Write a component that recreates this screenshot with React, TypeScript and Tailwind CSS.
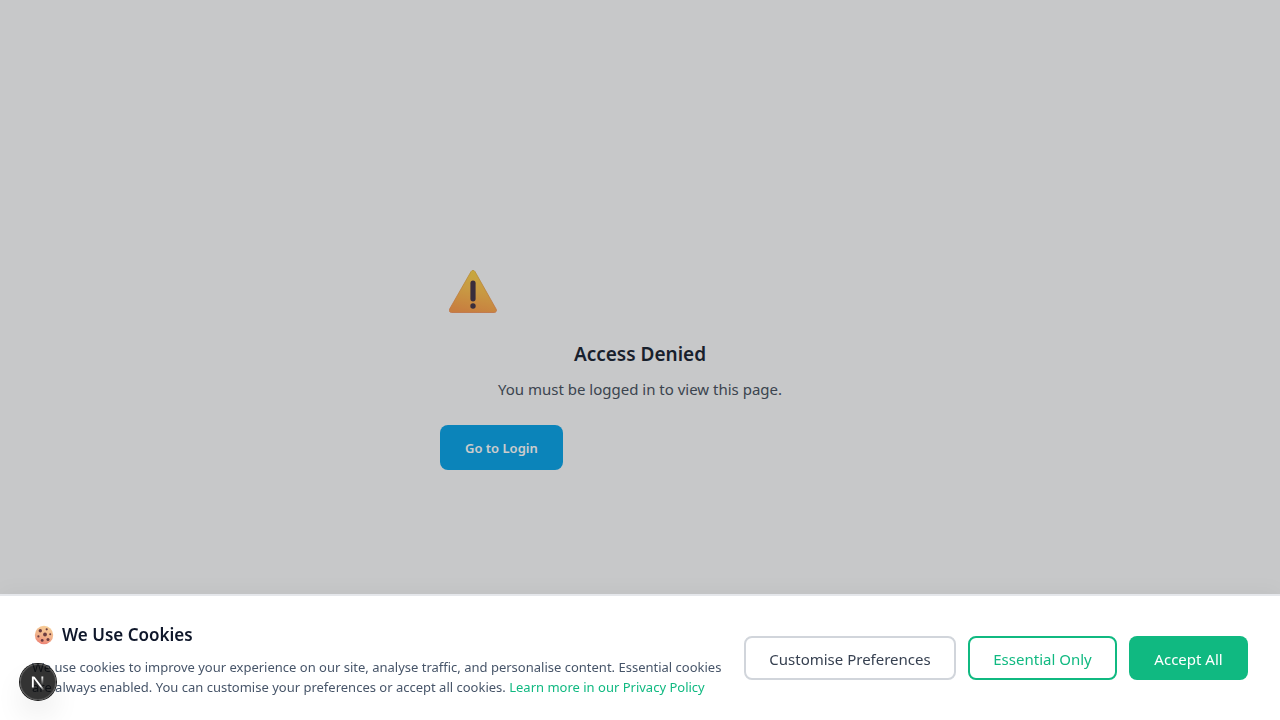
function WarningIcon() {
  return (
    <svg viewBox="0 0 48 43" className="ml-[9px] h-[43px] w-12" role="img" aria-label="Warning">
      <defs>
        <linearGradient id="warn-fill" x1="30" y1="3" x2="22" y2="43" gradientUnits="userSpaceOnUse">
          <stop offset="0" stopColor="#f9d24e" />
          <stop offset="0.45" stopColor="#fbc054" />
          <stop offset="1" stopColor="#f99e50" />
        </linearGradient>
        <linearGradient id="warn-edge" x1="24" y1="0" x2="24" y2="43" gradientUnits="userSpaceOnUse">
          <stop offset="0" stopColor="#e6b445" />
          <stop offset="1" stopColor="#f08c54" />
        </linearGradient>
      </defs>
      <path
        d="M22 1.6c.9-1.6 3.1-1.6 4 0l21.2 37.6c.9 1.6-.2 3.3-1.9 3.3H2.4c-1.7 0-2.7-1.7-1.9-3.3Z"
        fill="url(#warn-fill)"
        stroke="url(#warn-edge)"
        strokeWidth="0.8"
      />
      <rect x="21.4" y="10.6" width="5.2" height="20.8" rx="2.6" fill="#483a4c" />
      <circle cx="24" cy="36" r="2.7" fill="#483a4c" />
    </svg>
  );
}

function CookieIcon() {
  return (
    <svg viewBox="0 0 20 20" className="ml-[2px] size-5 shrink-0" aria-hidden="true">
      <defs>
        <linearGradient id="cookie-fill" x1="13" y1="1" x2="8" y2="20" gradientUnits="userSpaceOnUse">
          <stop offset="0" stopColor="#f8cf98" />
          <stop offset="0.55" stopColor="#f0b18b" />
          <stop offset="1" stopColor="#ed7d72" />
        </linearGradient>
      </defs>
      <circle cx="10" cy="10" r="9.2" fill="url(#cookie-fill)" />
      <g fill="#6b3c40">
        <circle cx="6.3" cy="5.7" r="1.7" />
        <circle cx="12.7" cy="4.3" r="1.1" />
        <circle cx="11" cy="9.5" r="1.9" />
        <circle cx="16.2" cy="9.2" r="1" />
        <circle cx="4.4" cy="11.4" r="1.1" />
        <circle cx="8.2" cy="15.4" r="1.4" />
        <circle cx="14" cy="14.6" r="1.5" />
      </g>
    </svg>
  );
}

function DevToolsButton() {
  return (
    <button
      type="button"
      aria-label="Open Next.js Dev Tools"
      className="fixed bottom-5 left-5 z-50 flex size-9 items-center justify-center rounded-full bg-black/80 shadow-[0_0_0_1px_#171717,inset_0_0_0_1px_rgba(255,255,255,0.14),0_16px_32px_-8px_rgba(0,0,0,0.24)]"
    >
      <svg viewBox="0 0 40 40" fill="none" className="size-10 shrink-0" aria-hidden="true">
        <defs>
          <linearGradient id="n-diagonal" x1="9.956" y1="11.123" x2="15.478" y2="17.967" gradientUnits="userSpaceOnUse">
            <stop stopColor="white" />
            <stop offset="0.604" stopColor="white" stopOpacity="0" />
            <stop offset="1" stopColor="white" stopOpacity="0" />
          </linearGradient>
          <linearGradient id="n-stem" x1="11.822" y1="1.4" x2="11.792" y2="9.625" gradientUnits="userSpaceOnUse">
            <stop stopColor="white" />
            <stop offset="1" stopColor="white" stopOpacity="0" />
          </linearGradient>
          <mask id="n-mask" maskUnits="userSpaceOnUse" x="0" y="0" width="20" height="20">
            <rect width="20" height="20" fill="white" />
            <rect width="5" height="1.5" fill="black" />
          </mask>
        </defs>
        <g transform="translate(12.5 13)">
          <path d="M13.3 15.2 L2.34 1 V12.6" stroke="url(#n-diagonal)" strokeWidth="1.86" mask="url(#n-mask)" />
          <path d="M11.825 1.5 V13.1" stroke="url(#n-stem)" strokeWidth="1.86" />
        </g>
      </svg>
    </button>
  );
}

export default function App() {
  return (
    <div className="min-h-screen bg-[#f9fafc] font-['Noto_Sans','Open_Sans',sans-serif]">
      <main className="flex min-h-screen items-center justify-center">
        <div className="w-full max-w-[400px] pt-5">
          <WarningIcon />
          <h1 className="mt-[27px] text-center text-[19px] leading-[28px] font-semibold text-[#1f2937]">Access Denied</h1>
          <p className="mt-[9px] text-center text-[15px] leading-6 text-[#4b5563]">
            You must be logged in to view this page.
          </p>
          <a
            href="#login"
            className="mt-6 inline-flex h-[45px] items-center rounded-lg bg-[#0ea5e9] px-[25px] pt-0.5 text-[13px] font-semibold text-white"
          >
            Go to Login
          </a>
        </div>
      </main>

      <div className="fixed inset-0 z-30 bg-black/20" />

      <section
        aria-labelledby="cookie-title"
        className="fixed inset-x-0 bottom-0 z-40 flex items-center gap-4 border-t-2 border-[#e5e7eb] bg-white px-8 py-[23px] shadow-[0_-4px_20px_rgba(0,0,0,0.03)]"
      >
        <div className="flex-1 pt-0.5">
          <h2 id="cookie-title" className="mb-2 flex items-center gap-2 text-[17px] leading-7 font-semibold text-[#0f172a]">
            <CookieIcon />
            We Use Cookies
          </h2>
          <p className="text-[13px] leading-5 text-[#475569]">
            We use cookies to improve your experience on our site, analyse traffic, and personalise content. Essential
            cookies are always enabled. You can customise your preferences or accept all cookies.{" "}
            <a href="#privacy" className="text-[#10b981]">
              Learn more in our Privacy Policy
            </a>
          </p>
        </div>
        <div className="flex shrink-0 gap-3 text-[15px] leading-6">
          <button type="button" className="h-11 w-[212px] rounded-lg border-2 border-[#d1d5db] pt-0.5 text-[#374151]">
            Customise Preferences
          </button>
          <button type="button" className="h-11 w-[149px] rounded-lg border-2 border-[#10b981] pt-0.5 text-[#10b981]">
            Essential Only
          </button>
          <button type="button" className="h-11 w-[119px] rounded-lg bg-[#10b981] pt-0.5 text-white">
            Accept All
          </button>
        </div>
      </section>

      <DevToolsButton />
    </div>
  );
}
